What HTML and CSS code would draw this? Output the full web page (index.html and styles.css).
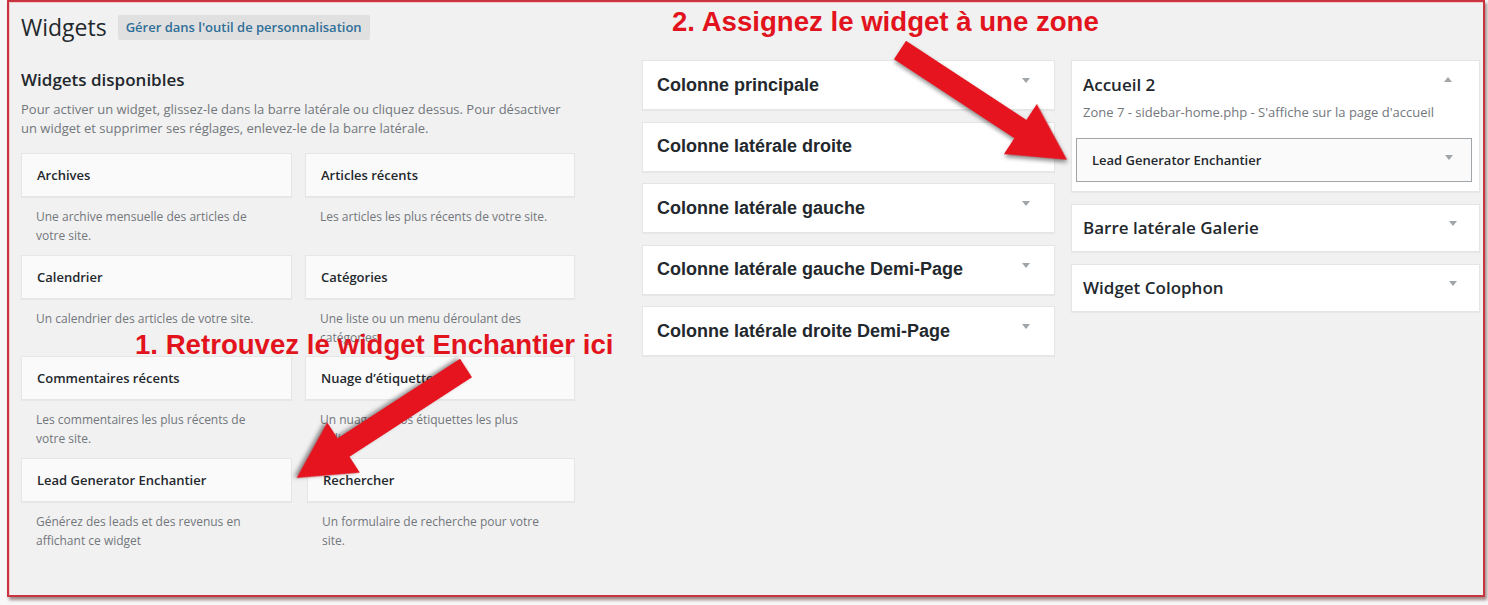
FILE: index.html
```html
<!DOCTYPE html>
<html lang="fr">
<head>
<meta charset="utf-8">
<title>Widgets</title>
<link rel="stylesheet" href="styles.css">
</head>
<body>
<div class="frame">
  <header class="top">
    <h1 class="page-title">Widgets</h1>
    <a class="btn">Gérer dans l'outil de personnalisation</a>
  </header>
  <div class="main">
    <section class="available">
      <h2 class="avail-title">Widgets disponibles</h2>
      <p class="intro">Pour activer un widget, glissez-le dans la barre latérale ou cliquez dessus. Pour désactiver un widget et supprimer ses réglages, enlevez-le de la barre latérale.</p>
      <div class="wgrid">
        <div class="widget"><div class="wtitle">Archives</div><div class="wdesc">Une archive mensuelle des articles de votre site.</div></div>
        <div class="widget"><div class="wtitle">Articles récents</div><div class="wdesc">Les articles les plus récents de votre site.</div></div>
        <div class="widget"><div class="wtitle">Calendrier</div><div class="wdesc">Un calendrier des articles de votre site.</div></div>
        <div class="widget"><div class="wtitle">Catégories</div><div class="wdesc">Une liste ou un menu déroulant des catégories.</div></div>
        <div class="widget"><div class="wtitle">Commentaires récents</div><div class="wdesc">Les commentaires les plus récents de votre site.</div></div>
        <div class="widget"><div class="wtitle">Nuage d’étiquettes</div><div class="wdesc">Un nuage de vos étiquettes les plus utilisées.</div></div>
        <div class="widget"><div class="wtitle">Lead Generator Enchantier</div><div class="wdesc">Générez des leads et des revenus en affichant ce widget</div></div>
        <div class="widget shifted"><div class="wtitle">Rechercher</div><div class="wdesc">Un formulaire de recherche pour votre site.</div></div>
      </div>
    </section>
    <section class="mid">
      <div class="sb"><span class="sb-name">Colonne principale</span><span class="tri"></span></div>
      <div class="sb"><span class="sb-name">Colonne latérale droite</span><span class="tri"></span></div>
      <div class="sb"><span class="sb-name">Colonne latérale gauche</span><span class="tri"></span></div>
      <div class="sb"><span class="sb-name">Colonne latérale gauche Demi-Page</span><span class="tri"></span></div>
      <div class="sb"><span class="sb-name">Colonne latérale droite Demi-Page</span><span class="tri"></span></div>
    </section>
    <section class="right">
      <div class="area open">
        <div class="area-head"><span class="area-name">Accueil 2</span><span class="tri up"></span></div>
        <div class="area-desc">Zone 7 - sidebar-home.php - S'affiche sur la page d'accueil</div>
        <div class="inwidget"><span>Lead Generator Enchantier</span><span class="tri"></span></div>
      </div>
      <div class="area closed"><span class="area-name">Barre latérale Galerie</span><span class="tri"></span></div>
      <div class="area closed"><span class="area-name">Widget Colophon</span><span class="tri"></span></div>
    </section>
  </div>
</div>

<div class="note note-2">2. Assignez le widget à une zone</div>
<div class="note note-1">1. Retrouvez le widget Enchantier ici</div>
<svg class="arrows" width="1488" height="605" viewBox="0 0 1488 605">
  <g class="arrow" transform="translate(900 50) rotate(33.3)">
    <polygon points="0,-11 144,-11 144,-30 200,0 144,30 144,11 0,11"/>
  </g>
  <g class="arrow" transform="translate(466 368) rotate(147)">
    <polygon points="0,-11 146,-11 146,-30 202,0 146,30 146,11 0,11"/>
  </g>
</svg>
</body>
</html>
```

FILE: styles.css
```css
* { box-sizing: border-box; }
html, body { margin: 0; padding: 0; }
body {
  position: relative;
  width: 1488px;
  height: 605px;
  background: #f7f7f7;
  font-family: "Open Sans", "Liberation Sans", sans-serif;
  color: #23282d;
  overflow: hidden;
}
.frame {
  margin-left: 7px;
  width: 1478px;
  height: 597px;
  background: #f1f1f1;
  border: 2px solid #c8343f;
  box-shadow: 2px 3px 3px rgba(60, 0, 0, 0.45), inset 1px 1px 0 #f6c9cc;
  padding: 13px 3px 0 12px;
}
.top {
  display: flex;
  align-items: center;
  height: 25px;
}
.page-title {
  margin: 0 11px 0 0;
  font-size: 23px;
  font-weight: 400;
  line-height: 25px;
  color: #23282d;
}
.btn {
  display: block;
  height: 25px;
  line-height: 25px;
  padding: 0 8px;
  background: #e0e0e0;
  border-radius: 2px;
  font-size: 13px;
  font-weight: 600;
  color: #2f6f98;
}
.main {
  display: flex;
  align-items: flex-start;
  margin-top: 20px;
}
.available { width: 556px; }
.avail-title {
  margin: 8px 0 0;
  font-size: 17px;
  font-weight: 600;
  line-height: 24px;
}
.intro {
  margin: 8px 0 0;
  font-size: 13px;
  line-height: 19px;
  color: #72777c;
}
.wgrid {
  display: grid;
  grid-template-columns: 271px 270px;
  column-gap: 13px;
  row-gap: 9.5px;
  margin-top: 15px;
}
.wtitle {
  height: 44px;
  line-height: 43px;
  padding: 0 15px;
  background: #fafafa;
  border: 1px solid #e6e6e6;
  box-shadow: 0 1px 1px rgba(0, 0, 0, 0.04);
  font-size: 13px;
  font-weight: 600;
  color: #23282d;
}
.shifted { margin-left: 2px; }
.wdesc {
  margin-top: 10px;
  min-height: 38px;
  padding: 0 15px;
  font-size: 12px;
  line-height: 19px;
  color: #72777c;
}
.mid {
  width: 413px;
  margin-left: 65px;
  display: flex;
  flex-direction: column;
  gap: 11.5px;
}
.sb {
  height: 50px;
  display: flex;
  align-items: center;
  padding: 0 24px 0 14px;
  background: #fff;
  border: 1px solid #e5e5e5;
  box-shadow: 0 1px 1px rgba(0, 0, 0, 0.04);
}
.sb-name {
  font-family: "Liberation Sans", Arial, sans-serif;
  font-weight: 700;
  font-size: 18px;
  color: #23282d;
}
.tri {
  margin-left: auto;
  align-self: flex-start;
  margin-top: 17px;
  width: 0;
  height: 0;
  border-left: 4px solid transparent;
  border-right: 4px solid transparent;
  border-top: 5px solid #a0a5aa;
}
.tri.up {
  border-top: 0;
  border-bottom: 5px solid #a0a5aa;
}
.right {
  width: 409px;
  margin-left: 16px;
  display: flex;
  flex-direction: column;
  gap: 12px;
}
.area {
  background: #fff;
  border: 1px solid #e5e5e5;
  box-shadow: 0 1px 1px rgba(0, 0, 0, 0.04);
}
.area-name {
  font-size: 17px;
  font-weight: 600;
  line-height: 24px;
  color: #23282d;
}
.area.open { padding: 12px 7px 9px 4px; }
.area-head {
  display: flex;
  padding: 0 20px 0 7px;
}
.area-head .tri { margin-top: 4px; }
.area-desc {
  margin-top: 6px;
  padding-left: 7px;
  font-size: 13px;
  line-height: 19px;
  color: #72777c;
}
.inwidget {
  margin-top: 16px;
  height: 44px;
  display: flex;
  align-items: center;
  padding: 0 18px 0 15px;
  background: #fafafa;
  border: 1px solid #a0a5aa;
  font-size: 13px;
  font-weight: 600;
}
.inwidget .tri { margin-top: 16px; }
.area.closed {
  height: 48px;
  display: flex;
  align-items: center;
  padding: 0 22px 0 11px;
}
.area.closed .tri { margin-top: 16px; }
.note {
  position: absolute;
  font-family: "Liberation Sans", Arial, sans-serif;
  font-weight: 700;
  font-size: 27.6px;
  line-height: 30px;
  color: #e2131d;
  white-space: nowrap;
}
.note-2 { left: 672px; top: 7px; }
.note-1 { left: 135px; top: 330px; }
.arrows {
  position: absolute;
  left: 0;
  top: 0;
  pointer-events: none;
}
.arrow polygon {
  fill: #e5141f;
}
.arrow {
  filter: drop-shadow(2px 2px 2px rgba(0, 0, 0, 0.45));
}
```
